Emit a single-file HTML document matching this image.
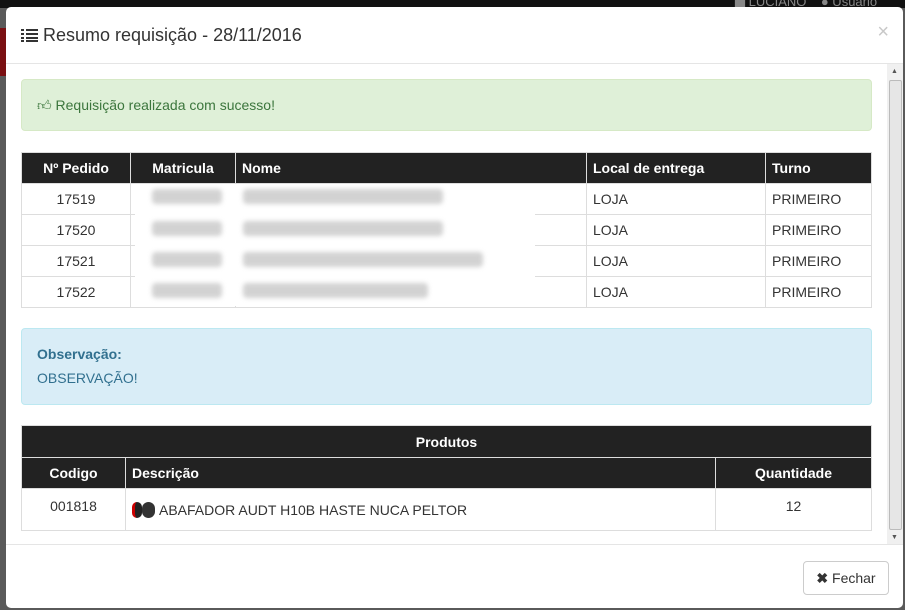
<!DOCTYPE html>
<html><head><meta charset="utf-8">
<style>
*{box-sizing:border-box;margin:0;padding:0}
body{width:905px;height:610px;overflow:hidden;background:#5a5a5a;font-family:"Liberation Sans",sans-serif;position:relative}
.topbar{position:absolute;left:0;top:0;width:905px;height:8px;background:#111}
.red{position:absolute;left:0;top:28px;width:8px;height:48px;background:#7a0f12}
.modal{position:absolute;left:6px;top:7px;width:897px;height:601px;background:#fff;border-radius:5px;overflow:hidden}
.hdr{position:absolute;left:0;top:0;width:897px;height:57px;border-bottom:1px solid #e5e5e5}
.hdr h4{position:absolute;left:15px;top:18px;font-size:18px;font-weight:normal;color:#333}
.x{position:absolute;right:14px;top:14px;font-size:20px;color:#c8c8c8}
.sb{position:absolute;left:881px;top:57px;width:16px;height:480px;background:#f0f0f0}
.thumb{position:absolute;left:2px;top:16px;width:13px;height:450px;background:#e6e6e6;border:1px solid #bbb;border-radius:2px}
.ftr{position:absolute;left:0;top:537px;width:897px;border-top:1px solid #e5e5e5;height:64px}
.btn{position:absolute;left:797px;top:16px;width:86px;height:34px;border:1px solid #ccc;border-radius:4px;font-size:14px;color:#333;line-height:32px;text-align:center}
.alert{position:absolute;border-radius:4px;font-size:14px}
.ok{left:15px;top:72px;width:851px;height:52px;background:#dff0d8;border:1px solid #d6e9c6;color:#3c763d;padding:17px 15px}
.obs{left:15px;top:321px;width:851px;height:77px;background:#d9edf7;border:1px solid #bce8f1;color:#31708f;padding:17px 15px}
table{position:absolute;border-collapse:collapse;font-size:14px;color:#333}
th{background:#222;color:#fff;font-weight:bold;height:31px;border:1px solid #ddd;padding:0 6px}
td{border:1px solid #ddd;height:31px;padding:0 6px}
.t1{left:15px;top:145px;width:851px}
.c{text-align:center}
.blur{position:absolute;height:15px;background:#b5b5b5;filter:blur(2.5px);opacity:.6;border-radius:4px}
.wh{position:absolute;left:129px;top:177px;width:400px;height:122px;background:#fff}
.t2{left:15px;top:418px;width:851px}
</style></head><body>
<div class="topbar"></div><div class="red"></div>
<div style="position:absolute;left:735px;top:-6px;color:#888;font-size:13px">▆ LUCIANO &nbsp;&nbsp; ● Usuário</div>
<div class="modal">
<div class="hdr"><h4><svg width="17" height="14" style="vertical-align:-1px;margin-right:5px"><g fill="#333"><rect x="0" y="1" width="3" height="2"/><rect x="5" y="1" width="12" height="2"/><rect x="0" y="5" width="3" height="2"/><rect x="5" y="5" width="12" height="2"/><rect x="0" y="9" width="3" height="2"/><rect x="5" y="9" width="12" height="2"/><rect x="0" y="12" width="3" height="2"/><rect x="5" y="12" width="12" height="2"/></g></svg>Resumo requisição - 28/11/2016</h4><span class="x">×</span></div>
<div class="alert ok">👍︎ Requisição realizada com sucesso!</div>
<table class="t1">
<tr><th style="width:109px">Nº Pedido</th><th style="width:105px">Matricula</th><th style="text-align:left;width:351px">Nome</th><th style="text-align:left;width:179px">Local de entrega</th><th style="text-align:left">Turno</th></tr>
<tr><td class="c">17519</td><td></td><td></td><td>LOJA</td><td>PRIMEIRO</td></tr>
<tr><td class="c">17520</td><td></td><td></td><td>LOJA</td><td>PRIMEIRO</td></tr>
<tr><td class="c">17521</td><td></td><td></td><td>LOJA</td><td>PRIMEIRO</td></tr>
<tr><td class="c">17522</td><td></td><td></td><td>LOJA</td><td>PRIMEIRO</td></tr>
</table>
<div class="wh"></div>
<div class="blur" style="left:146px;top:182px;width:70px"></div><div class="blur" style="left:237px;top:182px;width:200px"></div>
<div class="blur" style="left:146px;top:214px;width:70px"></div><div class="blur" style="left:237px;top:214px;width:200px"></div>
<div class="blur" style="left:146px;top:245px;width:70px"></div><div class="blur" style="left:237px;top:245px;width:240px"></div>
<div class="blur" style="left:146px;top:276px;width:70px"></div><div class="blur" style="left:237px;top:276px;width:185px"></div>
<div class="alert obs"><b>Observação:</b><div style="margin-top:8px">OBSERVAÇÃO!</div></div>
<table class="t2">
<tr><th colspan="3" style="height:32px">Produtos</th></tr>
<tr><th style="width:104px">Codigo</th><th style="text-align:left;width:590px">Descrição</th><th>Quantidade</th></tr>
<tr><td class="c" style="height:42px;vertical-align:top;padding-top:9px">001818</td><td style="height:42px"><span style="display:inline-block;width:10px;height:16px;background:#222;border-left:3px solid #c00;border-radius:5px;vertical-align:-3px"></span><span style="display:inline-block;width:13px;height:16px;background:#333;border-radius:7px;vertical-align:-3px;margin-right:4px"></span>ABAFADOR AUDT H10B HASTE NUCA PELTOR</td><td class="c" style="vertical-align:top;padding-top:9px">12</td></tr>
</table>
<div class="sb"><div style="position:absolute;top:4px;left:4px;font-size:7px;color:#555">▲</div><div class="thumb"></div><div style="position:absolute;bottom:3px;left:4px;font-size:7px;color:#555">▼</div></div>
<div class="ftr"><div class="btn"><b>✖</b> Fechar</div></div>
</div>
</body></html>
